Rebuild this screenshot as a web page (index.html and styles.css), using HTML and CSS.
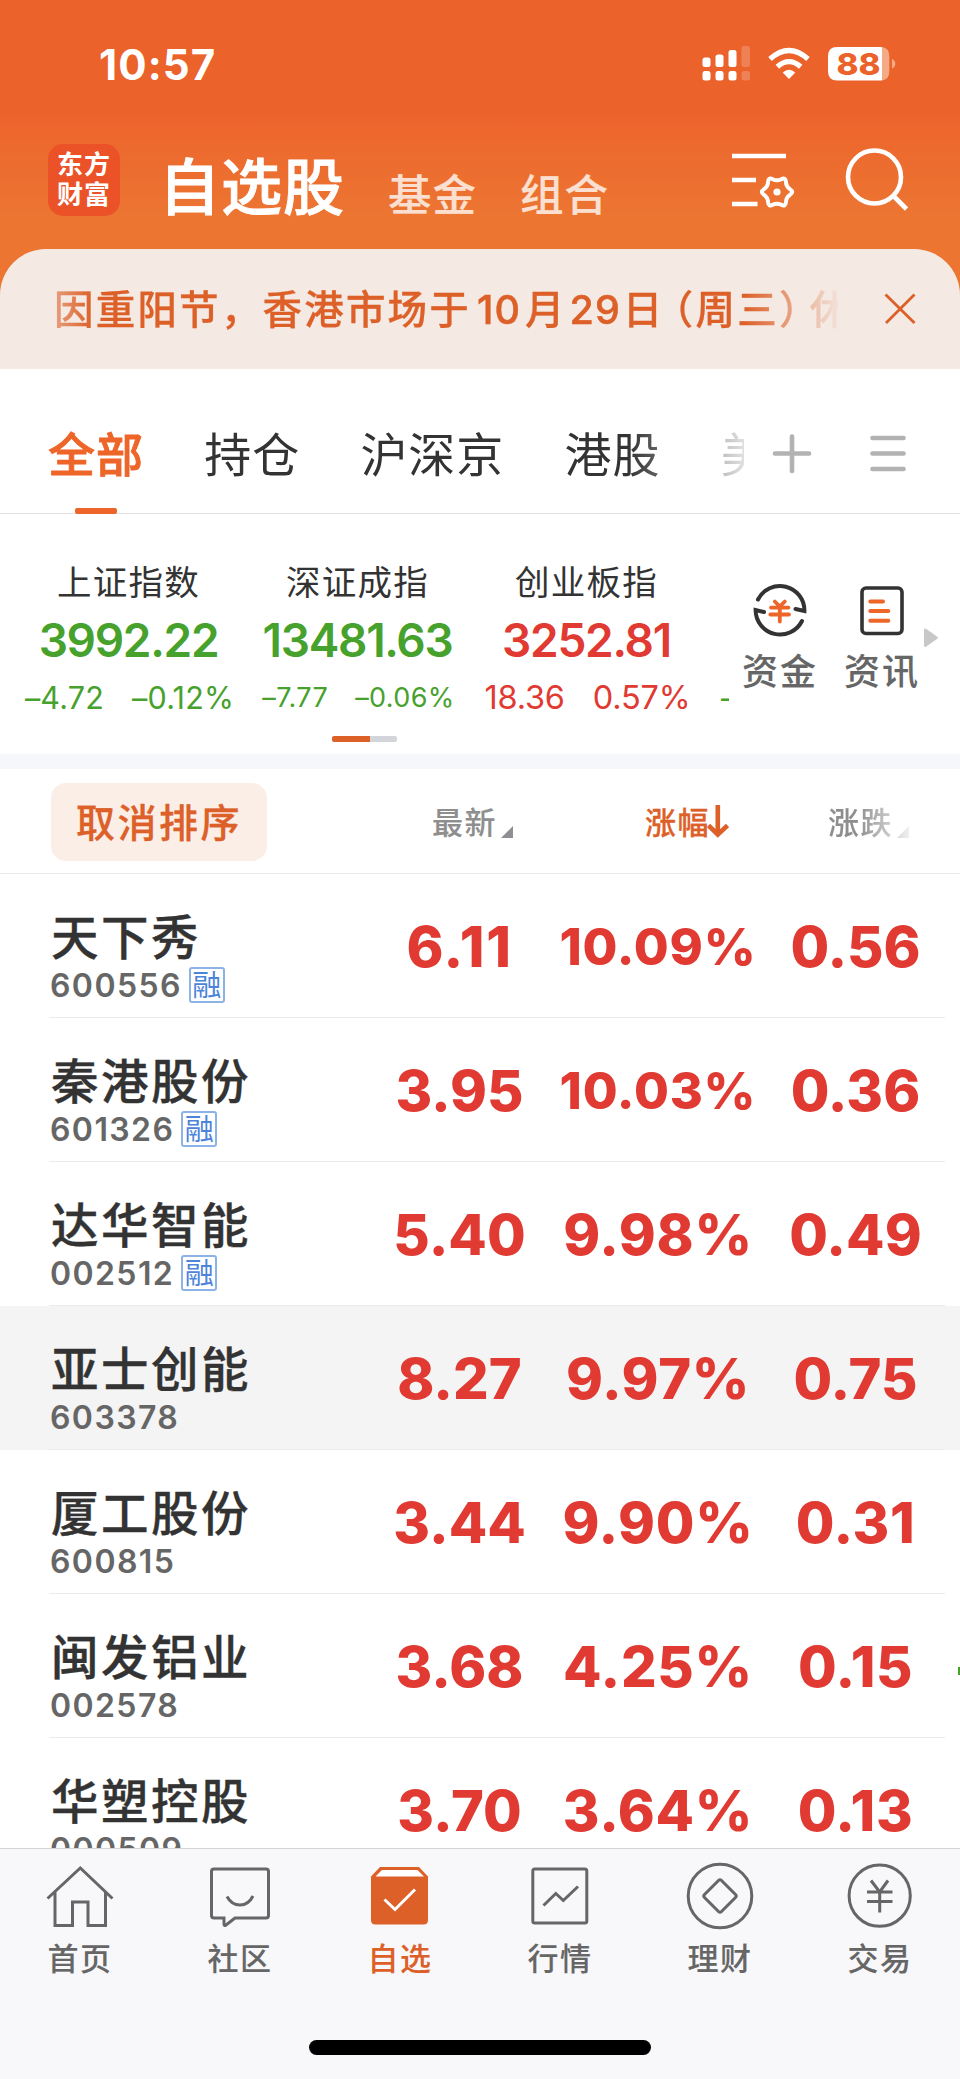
FILE: index.html
```html
<!DOCTYPE html>
<html lang="zh-CN">
<head>
<meta charset="utf-8">
<title>自选股</title>
<link rel="stylesheet" href="styles.css">
</head>
<body>
<div class="app">
  <header class="top">
    <div class="status">
      <span class="clock">10:57</span>
      <svg class="status-icons" width="200" height="40" viewBox="700 44 200 40">
        <g fill="#fff">
          <rect x="702.5" y="57.500" width="8" height="9.500" rx="2.5"/><rect x="715.5" y="54.500" width="8" height="12.500" rx="2.5"/><rect x="728.5" y="50" width="8" height="17" rx="2.5"/>
          <rect x="702.5" y="71" width="8" height="9.500" rx="2.5"/><rect x="715.5" y="71" width="8" height="9.500" rx="2.5"/><rect x="728.5" y="71" width="8" height="9.500" rx="2.5"/>
          <g opacity=".2"><rect x="741.5" y="46" width="8.500" height="21" rx="2.500"/><rect x="741.5" y="71" width="8.500" height="9.500" rx="2.500"/></g>
          <path d="M789 79 L782.700 72.500 Q789 67 795.300 72.500 Z"/>
        </g>
        <g fill="none" stroke="#fff" stroke-width="5.200">
          <path d="M770 59 Q789 42 808 59"/>
          <path d="M777.300 66.800 Q789 56.500 800.700 66.800"/>
        </g>
        <path d="M837 47 H882 V80.500 H837 Q828 80.500 828 71.500 V56 Q828 47 837 47 Z" fill="#fff"/>
        <path d="M882 47 Q889.300 48 889.300 56 V71.500 Q889.300 79.500 882 80.500 Z M892 59 Q895.300 60.500 895.300 63.700 Q895.300 67 892 68.500 Z" fill="#f3ab86"/>
        <text class="battery" x="858.500" y="75" text-anchor="middle" textLength="44" lengthAdjust="spacingAndGlyphs">88</text>
      </svg>
    </div>
    <div class="nav">
      <div class="logo"><span>东方</span><span>财富</span></div>
      <h1 class="title">自选股</h1>
      <span class="nav-link">基金</span>
      <span class="nav-link">组合</span>
      <svg class="nav-tools" width="180" height="66" viewBox="730 146 180 66" fill="none" stroke="#fff">
        <path d="M732 156 H786 M732 180 H756 M732 204 H757.500" stroke-width="4.500"/>
        <path d="M790.200 189.350 Q794.200 192 790.200 194.650 Q786.200 197.300 785.900 202.100 Q785.600 206.900 781.300 204.750 Q777 202.600 772.700 204.750 Q768.400 206.900 768.100 202.100 Q767.800 197.300 763.800 194.650 Q759.800 192 763.800 189.350 Q767.800 186.700 768.100 181.900 Q768.400 177.100 772.700 179.250 Q777 181.400 781.300 179.250 Q785.600 177.100 785.900 181.900 Q786.200 186.700 790.200 189.350 Z" stroke-width="4" stroke-linejoin="round"/>
        <circle cx="777" cy="192" r="3.600" fill="#fff" stroke="none"/>
        <circle cx="874.500" cy="177" r="26.500" stroke-width="4.600"/>
        <path d="M893 195.500 L906.500 209" stroke-width="4.600"/>
      </svg>
    </div>
  </header>

  <div class="notice">
    <p class="notice-text">因重阳节，香港市场于<span class="num month">10</span>月<span class="num">29</span>日<span class="lp">（</span>周三<span class="rp">）</span>休市</p>
    <svg class="close" width="34" height="34" viewBox="883 292 34 34" fill="none" stroke="#dc6028" stroke-width="2.800"><path d="M885.500 294.500 L914.500 323 M914.500 294.500 L886 323"/></svg>
  </div>

  <nav class="tabs">
    <div class="tab-scroll">
      <span class="tab on">全部</span><span class="tab">持仓</span><span class="tab">沪深京</span><span class="tab">港股</span><span class="tab">美股</span>
    </div>
    <svg class="tab-tools" width="140" height="44" viewBox="770 432 140 44" fill="none" stroke="#b2b2b2" stroke-width="4.600" stroke-linecap="round"><path d="M775 453.500 H809 M792 436.500 V471"/><path d="M872.500 438 H903.500 M872.500 453.500 H903.500 M872.500 469 H903.500"/></svg>
  </nav>

  <section class="market">
    <div class="indices">
      <div class="index down"><span class="index-name">上证指数</span><b>3992.22</b><span class="change c1"><i>–4.72</i><i>–0.12%</i></span></div>
      <div class="index down"><span class="index-name">深证成指</span><b>13481.63</b><span class="change c2"><i>–7.77</i><i>–0.06%</i></span></div>
      <div class="index up"><span class="index-name">创业板指</span><b>3252.81</b><span class="change c3"><i>18.36</i><i>0.57%</i></span></div>
      <div class="index down next"><span class="change c1"><i>–</i></span></div>
    </div>
    <div class="quick">
      <div class="quick-item">
        <svg width="56" height="56" viewBox="752 582 56 56" fill="none" stroke="#333" stroke-width="4" stroke-linecap="round">
          <path d="M758 599.500 A24.500 24.500 0 0 1 804.400 611 L795.500 609"/>
          <path d="M802 621 A24.500 24.500 0 0 1 755.600 610 L764 612"/>
          <path d="M774.800 601.500 L779.800 606.500 L784.800 601.500 M771 607.600 H788.500 M770.300 614.500 H789 M779.800 607 V621.500" stroke="#ee6529" stroke-width="3.800"/>
        </svg>
        <span>资金</span>
      </div>
      <div class="quick-item">
        <svg width="56" height="56" viewBox="854 582 56 56" fill="none" stroke="#333" stroke-width="3.600" stroke-linecap="round">
          <rect x="862" y="588" width="40" height="45.500" rx="4"/>
          <path d="M870.300 601.500 H883 M870.300 611 H888.300 M870.300 620.700 H888.300" stroke="#ee6529" stroke-width="4"/>
        </svg>
        <span>资讯</span>
      </div>
    </div>
    <svg class="more" width="14" height="20" viewBox="0 0 14 20"><path d="M0 2 Q0 0 2 .8 L13 8.500 Q14.500 9.700 13 11 L2 18.800 Q0 19.500 0 17.500 Z" fill="#c8c8c8"/></svg>
    <div class="pager"></div>
  </section>

  <div class="columns">
    <button class="unsort">取消排序</button>
    <span class="col">最新<svg class="tri" width="12" height="12"><path d="M12 0 V12 H0 Z" fill="#8e8e93"/></svg></span>
    <span class="col sorted">涨幅<svg class="arrow" width="22" height="34" viewBox="0 0 22 34" fill="none" stroke="#dc6028" stroke-width="4.600"><path d="M10.800 0 V29 M1.500 20.500 L10.800 29.500 L20.500 20.500"/></svg></span>
    <span class="col fade">涨跌<svg class="tri" width="12" height="12"><path d="M12 0 V12 H0 Z" fill="#8e8e93"/></svg></span>
  </div>

  <main class="list">
    <div class="row"><div class="stock"><span class="name">天下秀</span><span class="code">600556<em>融</em></span></div><b class="ones">6.11</b><b class="pct long">10.09%</b><b>0.56</b></div>
    <div class="row"><div class="stock"><span class="name">秦港股份</span><span class="code">601326<em>融</em></span></div><b>3.95</b><b class="pct long">10.03%</b><b>0.36</b></div>
    <div class="row"><div class="stock"><span class="name">达华智能</span><span class="code">002512<em>融</em></span></div><b>5.40</b><b class="pct">9.98%</b><b>0.49</b></div>
    <div class="row active"><div class="stock"><span class="name">亚士创能</span><span class="code">603378</span></div><b>8.27</b><b class="pct">9.97%</b><b>0.75</b></div>
    <div class="row"><div class="stock"><span class="name">厦工股份</span><span class="code">600815</span></div><b>3.44</b><b class="pct">9.90%</b><b class="one">0.31</b></div>
    <div class="row"><div class="stock"><span class="name">闽发铝业</span><span class="code">002578</span></div><b>3.68</b><b class="pct">4.25%</b><b class="one">0.15</b><i class="peek"></i></div>
    <div class="row"><div class="stock"><span class="name">华塑控股</span><span class="code">000509</span></div><b>3.70</b><b class="pct">3.64%</b><b class="one">0.13</b></div>
  </main>

  <footer class="tabbar">
    <div class="items">
      <div class="item"><svg width="70" height="70" viewBox="45 1862 70 70"><path d="M47.500 1898.500 L80.300 1868 L112.500 1898.500 M55 1892 V1925.500 H72.500 V1902 H88 V1925.500 H105.500 V1892"/></svg><span>首页</span></div>
      <div class="item"><svg width="70" height="70" viewBox="205 1862 70 70"><path d="M214 1869 H266 Q268.500 1869 268.500 1871.500 V1915.500 Q268.500 1918 266 1918 H235 L226 1925 Q224 1926.500 224 1924 V1918 H214 Q211.500 1918 211.500 1915.500 V1871.500 Q211.500 1869 214 1869 Z M227 1896.500 Q231.500 1905 240 1905 Q248.500 1905 253 1896"/></svg><span>社区</span></div>
      <div class="item on"><svg width="70" height="70" viewBox="365 1862 70 70"><path d="M380 1867 H419 L428 1876.500 V1920 Q428 1924.500 423.500 1924.500 H375.500 Q371 1924.500 371 1920 V1876.500 Z" fill="#dc6028" stroke="none"/><path d="M382 1870 H417.500 L424 1876.500 H375.500 Z" fill="#fff" stroke="none"/><path d="M384.500 1899.500 L395 1909.500 L415 1889.500" stroke="#fff"/></svg><span>自选</span></div>
      <div class="item"><svg width="70" height="70" viewBox="525 1862 70 70"><rect x="532.800" y="1869" width="54" height="54" rx="2"/><path d="M543.500 1905.500 L555.800 1893.500 L563.300 1900.500 L578 1886.500"/></svg><span>行情</span></div>
      <div class="item"><svg width="70" height="70" viewBox="685 1862 70 70"><circle cx="720" cy="1896" r="31.800"/><path d="M718.500 1880.500 Q720 1879 721.500 1880.500 L735.500 1894.500 Q737 1896 735.500 1897.500 L721.500 1911.500 Q720 1913 718.500 1911.500 L704.500 1897.500 Q703 1896 704.500 1894.500 Z"/></svg><span>理财</span></div>
      <div class="item"><svg width="70" height="70" viewBox="845 1862 70 70"><circle cx="879.700" cy="1895.700" r="30.600"/><path d="M871 1880.500 L879.700 1892 L888 1880.500 M867 1892 H892.500 M867 1901.500 H892.500 M879.700 1892 V1912.500"/></svg><span>交易</span></div>
    </div>
    <div class="home-bar"></div>
  </footer>
</div>
</body>
</html>
```
FILE: styles.css
```css
* { box-sizing: border-box; margin: 0; padding: 0; }
body { width: 960px; background: #fff; color: #333; font-family: Inter, "Noto Sans CJK SC", sans-serif; }
svg { display: block; flex: none; }
i, em { font-style: normal; }
.app { width: 960px; height: 2079px; overflow: hidden; display: flex; flex-direction: column; background: linear-gradient(#eb622b 0, #eb622b 108px, #ed662d 125px, #ec7532 215px, #ec7532 320px, #fff 320px); }

.top { height: 249px; flex: none; color: #fff; }
.status { height: 128px; display: flex; justify-content: space-between; padding: 44px 60px 0 99px; }
.clock { font-size: 42px; line-height: 41px; font-weight: 750; letter-spacing: 1.100px; }
.battery { font: 800 30px/1 Inter, sans-serif; fill: #eb622b; }
.nav { height: 121px; display: flex; padding: 16px 0 0 48px; }
.logo { width: 72px; height: 72px; border-radius: 15px; background: #ec5228; display: flex; flex-direction: column; align-items: center; justify-content: center; font-size: 26px; line-height: 30px; font-weight: 700; letter-spacing: 1px; }
.title { margin: 12px 0 0 39px; width: 186px; font-size: 61px; line-height: 64px; font-weight: 500; letter-spacing: 1px; -webkit-text-stroke: .9px; white-space: nowrap; }
.nav-link { margin: 28px 0 0 43px; width: 89px; font-size: 43.500px; line-height: 46px; font-weight: 500; letter-spacing: 1px; color: #fbe0d1; white-space: nowrap; -webkit-text-stroke: .2px; }
.nav-tools { margin: 2px 0 0 121px; }

.notice { height: 120px; flex: none; background: #f4e9e3; border-radius: 46px 46px 0 0; display: flex; align-items: flex-start; padding: 0 43px 0 54px; justify-content: space-between; }
.notice-text { width: 784px; margin-top: 31px; overflow: hidden; white-space: nowrap; font-size: 39.500px; line-height: 60px; font-weight: 500; letter-spacing: 2.200px; color: #dc6028; -webkit-text-stroke: .3px; -webkit-mask-image: linear-gradient(90deg, rgba(0,0,0,.55), #000 38px, #000 690px, rgba(0,0,0,.05) 784px); mask-image: linear-gradient(90deg, rgba(0,0,0,.55), #000 38px, #000 690px, rgba(0,0,0,.05) 784px); }
.num { letter-spacing: 1px; margin: 0 2px 0 3px; -webkit-text-stroke: .5px; }
.num.month { margin: 0 4px 0 6px; }
.lp, .rp { font-feature-settings: "halt"; }
.lp { margin-left: 9px; }
.rp { margin-right: 9px; }
.close { margin-top: 43px; }

.tabs { height: 145px; flex: none; background: #fff; border-bottom: 1px solid #e3e3e3; display: flex; justify-content: space-between; padding: 0 50px 0 48px; }
.tab-scroll { width: 696px; height: 145px; overflow: hidden; display: flex; gap: 60.200px; white-space: nowrap; -webkit-mask-image: linear-gradient(90deg, #000 580px, rgba(0,0,0,.15) 696px); mask-image: linear-gradient(90deg, #000 580px, rgba(0,0,0,.15) 696px); }
.tab { flex: none; padding-top: 58px; font-size: 47px; line-height: 56px; letter-spacing: 1px; }
.tab.on { color: #ee6529; font-weight: 500; -webkit-text-stroke: .8px; }
.tab.on::after { content: ""; display: block; width: 42px; height: 6px; margin: 25px 0 0 27px; border-radius: 2px; background: #ee6529; }
.tab-tools { margin-top: 63px; }

.market { height: 240px; flex: none; background: #fff; position: relative; display: flex; }
.indices { width: 729px; overflow: hidden; padding: 45px 0 0 14px; display: flex; }
.index { width: 229px; flex: none; display: flex; flex-direction: column; align-items: center; }
.index-name { font-size: 34.500px; line-height: 48px; letter-spacing: 1.300px; color: #333; }
.index b { font-size: 46px; line-height: 67px; font-weight: 600; letter-spacing: -1.300px; }
.change { display: flex; line-height: 48px; letter-spacing: .2px; padding-left: 2px; }
.down { color: #47a12d; }
.up { color: #e03a32; }
.c1 { font-size: 30.500px; gap: 28px; }
.c2 { font-size: 27px; gap: 27px; letter-spacing: .4px; }
.c3 { font-size: 32.500px; gap: 28px; letter-spacing: -.2px; }
.index.next { align-items: flex-start; padding: 115px 0 0 18px; }
.quick { display: flex; margin-left: 12px; gap: 24px; }
.quick-item { width: 78px; display: flex; flex-direction: column; align-items: center; gap: 12px; padding-top: 68px; }
.quick-item svg { margin-left: 0; }
.quick-item span { font-size: 36px; line-height: 45px; font-weight: 500; color: #666; letter-spacing: 2px; white-space: nowrap; -webkit-text-stroke: .1px; }
.more { position: absolute; left: 924px; top: 114px; }
.pager { position: absolute; left: 332px; top: 222px; width: 65px; height: 6px; border-radius: 2px; background: linear-gradient(90deg, #dc6028 38px, #d4d5da 38px); }

.columns { height: 120px; flex: none; background: #fff; border-top: 15px solid #f6f7fa; border-bottom: 1px solid #ebebeb; display: flex; align-items: flex-start; padding: 14px 0 0 51px; color: #8e8e8e; }
.unsort { width: 216px; height: 78px; border: 0; border-radius: 15px; background: #fbeee7; color: #dc6028; font: 500 39px/80px Inter, "Noto Sans CJK SC", sans-serif; letter-spacing: 2.500px; text-align: center; -webkit-text-stroke: .3px; }
.col { display: flex; margin: 17px 0 0 165px; height: 46px; font-size: 31px; line-height: 46px; font-weight: 500; letter-spacing: 1.500px; -webkit-text-stroke: .1px; }
.tri { margin: 26px 0 0 4px; }
.sorted { margin-left: 132px; color: #dc6028; -webkit-text-stroke: .3px; }
.arrow { margin: 5px 0 0 -3px; }
.fade { margin-left: 99px; -webkit-mask-image: linear-gradient(90deg, #000 30px, rgba(0,0,0,.15) 80px); mask-image: linear-gradient(90deg, #000 30px, rgba(0,0,0,.15) 80px); }

.list { height: 974px; flex: none; overflow: hidden; background: #fff; }
.row { position: relative; height: 144px; display: grid; grid-template-columns: 310px 197px 200px 195px 7px; align-items: center; justify-items: center; padding-left: 51px; }
.row::after { content: ""; position: absolute; left: 49px; right: 15px; bottom: 0; height: 1px; background: #ebebeb; }
.row.active { background: #f4f4f4; }
.row b { padding-top: 2px; font-size: 56px; line-height: 60px; font-weight: 800; color: #e03a32; white-space: nowrap; }
.row b.pct { letter-spacing: .7px; }
.row b.long { font-size: 50.500px; letter-spacing: .8px; }
.row b.one { letter-spacing: .6px; }
.row b.ones { letter-spacing: 1.600px; }
.stock { justify-self: start; height: 144px; display: flex; flex-direction: column; padding-top: 34px; }
.name { font-size: 47.500px; line-height: 60px; font-weight: 500; letter-spacing: 2.500px; -webkit-text-stroke: .35px; }
.code { display: flex; align-items: center; height: 36px; margin: -1px 0 0 -1px; font-size: 32px; font-weight: 600; letter-spacing: 1.400px; color: #666; }
.code em { width: 36px; height: 36px; margin-left: 7px; border: 2px solid #8cb2e6; border-radius: 3px; color: #4b84d8; font-size: 29px; line-height: 33px; font-weight: 400; letter-spacing: 0; text-align: center; }
.peek { align-self: start; justify-self: end; margin-top: 73px; width: 2px; height: 8px; background: #47a12d; }

.tabbar { height: 231px; flex: none; background: #f8f8fa; border-top: 1px solid #d4d4da; }
.items { display: flex; padding-top: 13px; }
.item { width: 160px; display: flex; flex-direction: column; align-items: center; color: #666; }
.item svg { fill: none; stroke: #666; stroke-width: 3; }
.item span { margin-top: 4px; font-size: 31px; line-height: 46px; font-weight: 500; letter-spacing: 1.500px; -webkit-text-stroke: .1px; }
.item.on { color: #dc6028; }
.home-bar { width: 342px; height: 15px; margin: 58px auto 0; border-radius: 8px; background: #000; }
```
